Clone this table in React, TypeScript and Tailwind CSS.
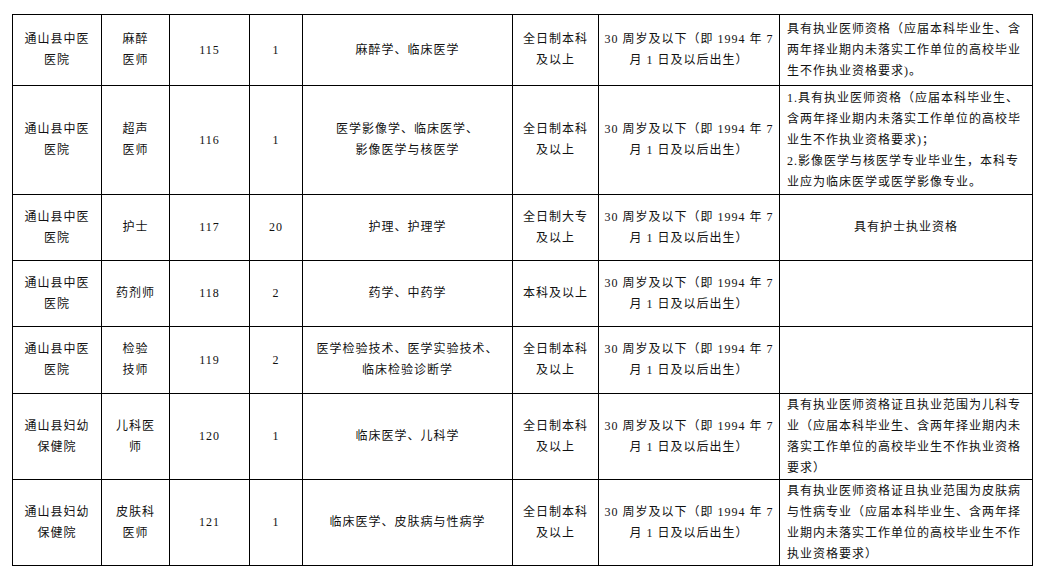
type Row = {
  unit: string[];
  post: string[];
  code: string;
  count: string;
  major: string[];
  edu: string[];
  req: string[];
  reqCenter?: boolean;
  h: string;
};

const age = ["30 周岁及以下（即 1994 年 7", "月 1 日及以后出生）"];

const rows: Row[] = [
  {
    unit: ["通山县中医", "医院"],
    post: ["麻醉", "医师"],
    code: "115",
    count: "1",
    major: ["麻醉学、临床医学"],
    edu: ["全日制本科", "及以上"],
    req: [
      "具有执业医师资格（应届本科毕业生、含",
      "两年择业期内未落实工作单位的高校毕业",
      "生不作执业资格要求)。",
    ],
    h: "h-[71px]",
  },
  {
    unit: ["通山县中医", "医院"],
    post: ["超声", "医师"],
    code: "116",
    count: "1",
    major: ["医学影像学、临床医学、", "影像医学与核医学"],
    edu: ["全日制本科", "及以上"],
    req: [
      "1.具有执业医师资格（应届本科毕业生、",
      "含两年择业期内未落实工作单位的高校毕",
      "业生不作执业资格要求)；",
      "2.影像医学与核医学专业毕业生，本科专",
      "业应为临床医学或医学影像专业。",
    ],
    h: "h-[109px]",
  },
  {
    unit: ["通山县中医", "医院"],
    post: ["护士"],
    code: "117",
    count: "20",
    major: ["护理、护理学"],
    edu: ["全日制大专", "及以上"],
    req: ["具有护士执业资格"],
    reqCenter: true,
    h: "h-[66px]",
  },
  {
    unit: ["通山县中医", "医院"],
    post: ["药剂师"],
    code: "118",
    count: "2",
    major: ["药学、中药学"],
    edu: ["本科及以上"],
    req: [],
    h: "h-[66px]",
  },
  {
    unit: ["通山县中医", "医院"],
    post: ["检验", "技师"],
    code: "119",
    count: "2",
    major: ["医学检验技术、医学实验技术、", "临床检验诊断学"],
    edu: ["全日制本科", "及以上"],
    req: [],
    h: "h-[67px]",
  },
  {
    unit: ["通山县妇幼", "保健院"],
    post: ["儿科医", "师"],
    code: "120",
    count: "1",
    major: ["临床医学、儿科学"],
    edu: ["全日制本科", "及以上"],
    req: [
      "具有执业医师资格证且执业范围为儿科专",
      "业（应届本科毕业生、含两年择业期内未",
      "落实工作单位的高校毕业生不作执业资格",
      "要求）",
    ],
    h: "h-[86px]",
  },
  {
    unit: ["通山县妇幼", "保健院"],
    post: ["皮肤科", "医师"],
    code: "121",
    count: "1",
    major: ["临床医学、皮肤病与性病学"],
    edu: ["全日制本科", "及以上"],
    req: [
      "具有执业医师资格证且执业范围为皮肤病",
      "与性病专业（应届本科毕业生、含两年择",
      "业期内未落实工作单位的高校毕业生不作",
      "执业资格要求）",
    ],
    h: "h-[86px]",
  },
];

const Lines = ({ lines }: { lines: string[] }) => (
  <>
    {lines.map((l, i) => (
      <div key={i} className="whitespace-nowrap">
        {l}
      </div>
    ))}
  </>
);

const cell = "border border-black p-0 text-center align-middle";

export default function App() {
  return (
    <div className="min-h-[578px] w-[1047px] bg-white pl-[12px] pt-[14px] font-['Liberation_Serif','Noto_Sans_CJK_SC',serif] text-[12px] leading-[21px] tracking-[1px] text-[#111]">
      <table className="table-fixed border-collapse">
        <colgroup>
          <col className="w-[89px]" />
          <col className="w-[68px]" />
          <col className="w-[80px]" />
          <col className="w-[53px]" />
          <col className="w-[210px]" />
          <col className="w-[86px]" />
          <col className="w-[181px]" />
          <col className="w-[253px]" />
        </colgroup>
        <tbody>
          {rows.map((r) => (
            <tr key={r.code} className={r.h}>
              <td className={cell}>
                <Lines lines={r.unit} />
              </td>
              <td className={cell}>
                <Lines lines={r.post} />
              </td>
              <td className={cell}>{r.code}</td>
              <td className={cell}>{r.count}</td>
              <td className={cell}>
                <Lines lines={r.major} />
              </td>
              <td className={cell}>
                <Lines lines={r.edu} />
              </td>
              <td className={cell}>
                <Lines lines={age} />
              </td>
              <td
                className={`border border-black p-0 align-middle ${
                  r.reqCenter ? "text-center" : "px-[7px] text-left"
                }`}
              >
                <Lines lines={r.req} />
              </td>
            </tr>
          ))}
        </tbody>
      </table>
    </div>
  );
}
